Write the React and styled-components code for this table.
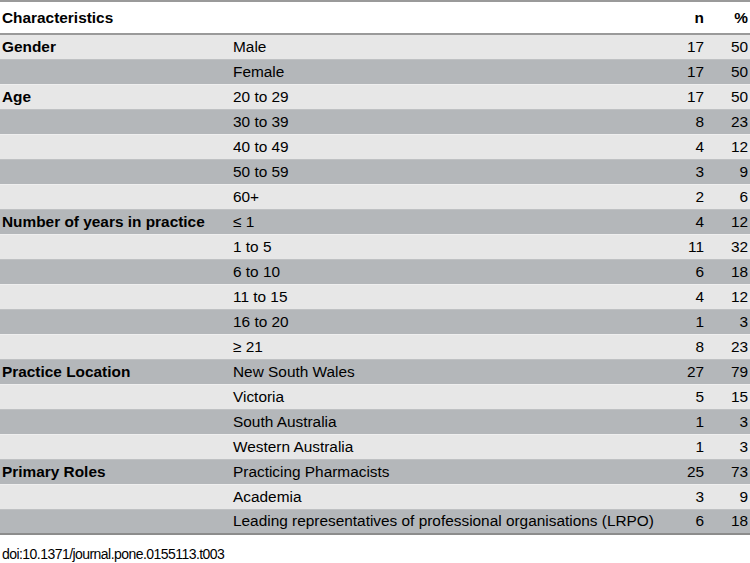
import React from "react";
import styled, { createGlobalStyle } from "styled-components";

const GlobalStyle = createGlobalStyle`
  body {
    margin: 0;
    background: #ffffff;
    font-family: "Liberation Sans", Arial, sans-serif;
    color: #000000;
  }
`;

const Wrap = styled.div`
  width: 750px;
`;

const Table = styled.table`
  width: 750px;
  border-collapse: collapse;
  border-top: 2px solid #9a9a9a;
  border-bottom: 2px solid #8c8c8c;
  font-size: 15.4px;
`;

const HeadRow = styled.tr`
  height: 33px;
  background: #ffffff;
  border-bottom: 2px solid #9a9a9a;
`;

const Row = styled.tr`
  height: 25px;
  background: ${(p) => (p.dark ? "#b4b7ba" : "#e7e7e7")};
  border-top: 1px solid ${(p) => (p.dark ? "#bfc1c3" : "#efefef")};
`;

const Cell = styled.td`
  padding: 0 2px;
  text-align: ${(p) => (p.num ? "right" : "left")};
  font-weight: ${(p) => (p.bold ? 700 : 400)};
  white-space: nowrap;
  vertical-align: middle;
  width: ${(p) => p.w || "auto"};
`;

const Doi = styled.div`
  margin-top: 11px;
  padding-left: 2px;
  font-size: 14px;
  letter-spacing: -0.55px;
`;

const groups = [
  ["Gender", [["Male", 17, 50], ["Female", 17, 50]]],
  ["Age", [["20 to 29", 17, 50], ["30 to 39", 8, 23], ["40 to 49", 4, 12], ["50 to 59", 3, 9], ["60+", 2, 6]]],
  ["Number of years in practice", [["\u2264 1", 4, 12], ["1 to 5", 11, 32], ["6 to 10", 6, 18], ["11 to 15", 4, 12], ["16 to 20", 1, 3], ["\u2265 21", 8, 23]]],
  ["Practice Location", [["New South Wales", 27, 79], ["Victoria", 5, 15], ["South Australia", 1, 3], ["Western Australia", 1, 3]]],
  ["Primary Roles", [["Practicing Pharmacists", 25, 73], ["Academia", 3, 9], ["Leading representatives of professional organisations (LRPO)", 6, 18]]],
];

export default function App() {
  let i = 0;
  const rows = [];
  groups.forEach(([label, items]) => {
    items.forEach(([name, n, pct], j) => {
      rows.push(
        <Row key={i} dark={i % 2 === 1}>
          <Cell bold>{j === 0 ? label : ""}</Cell>
          <Cell>{name}</Cell>
          <Cell num>{n}</Cell>
          <Cell num>{pct}</Cell>
        </Row>
      );
      i++;
    });
  });

  return (
    <Wrap>
      <GlobalStyle />
      <Table>
        <tbody>
          <HeadRow>
            <Cell bold w="227px">Characteristics</Cell>
            <Cell w="auto"></Cell>
            <Cell bold num w="40px">n</Cell>
            <Cell bold num w="40px">%</Cell>
          </HeadRow>
          {rows}
        </tbody>
      </Table>
      <Doi>doi:10.1371/journal.pone.0155113.t003</Doi>
    </Wrap>
  );
}
